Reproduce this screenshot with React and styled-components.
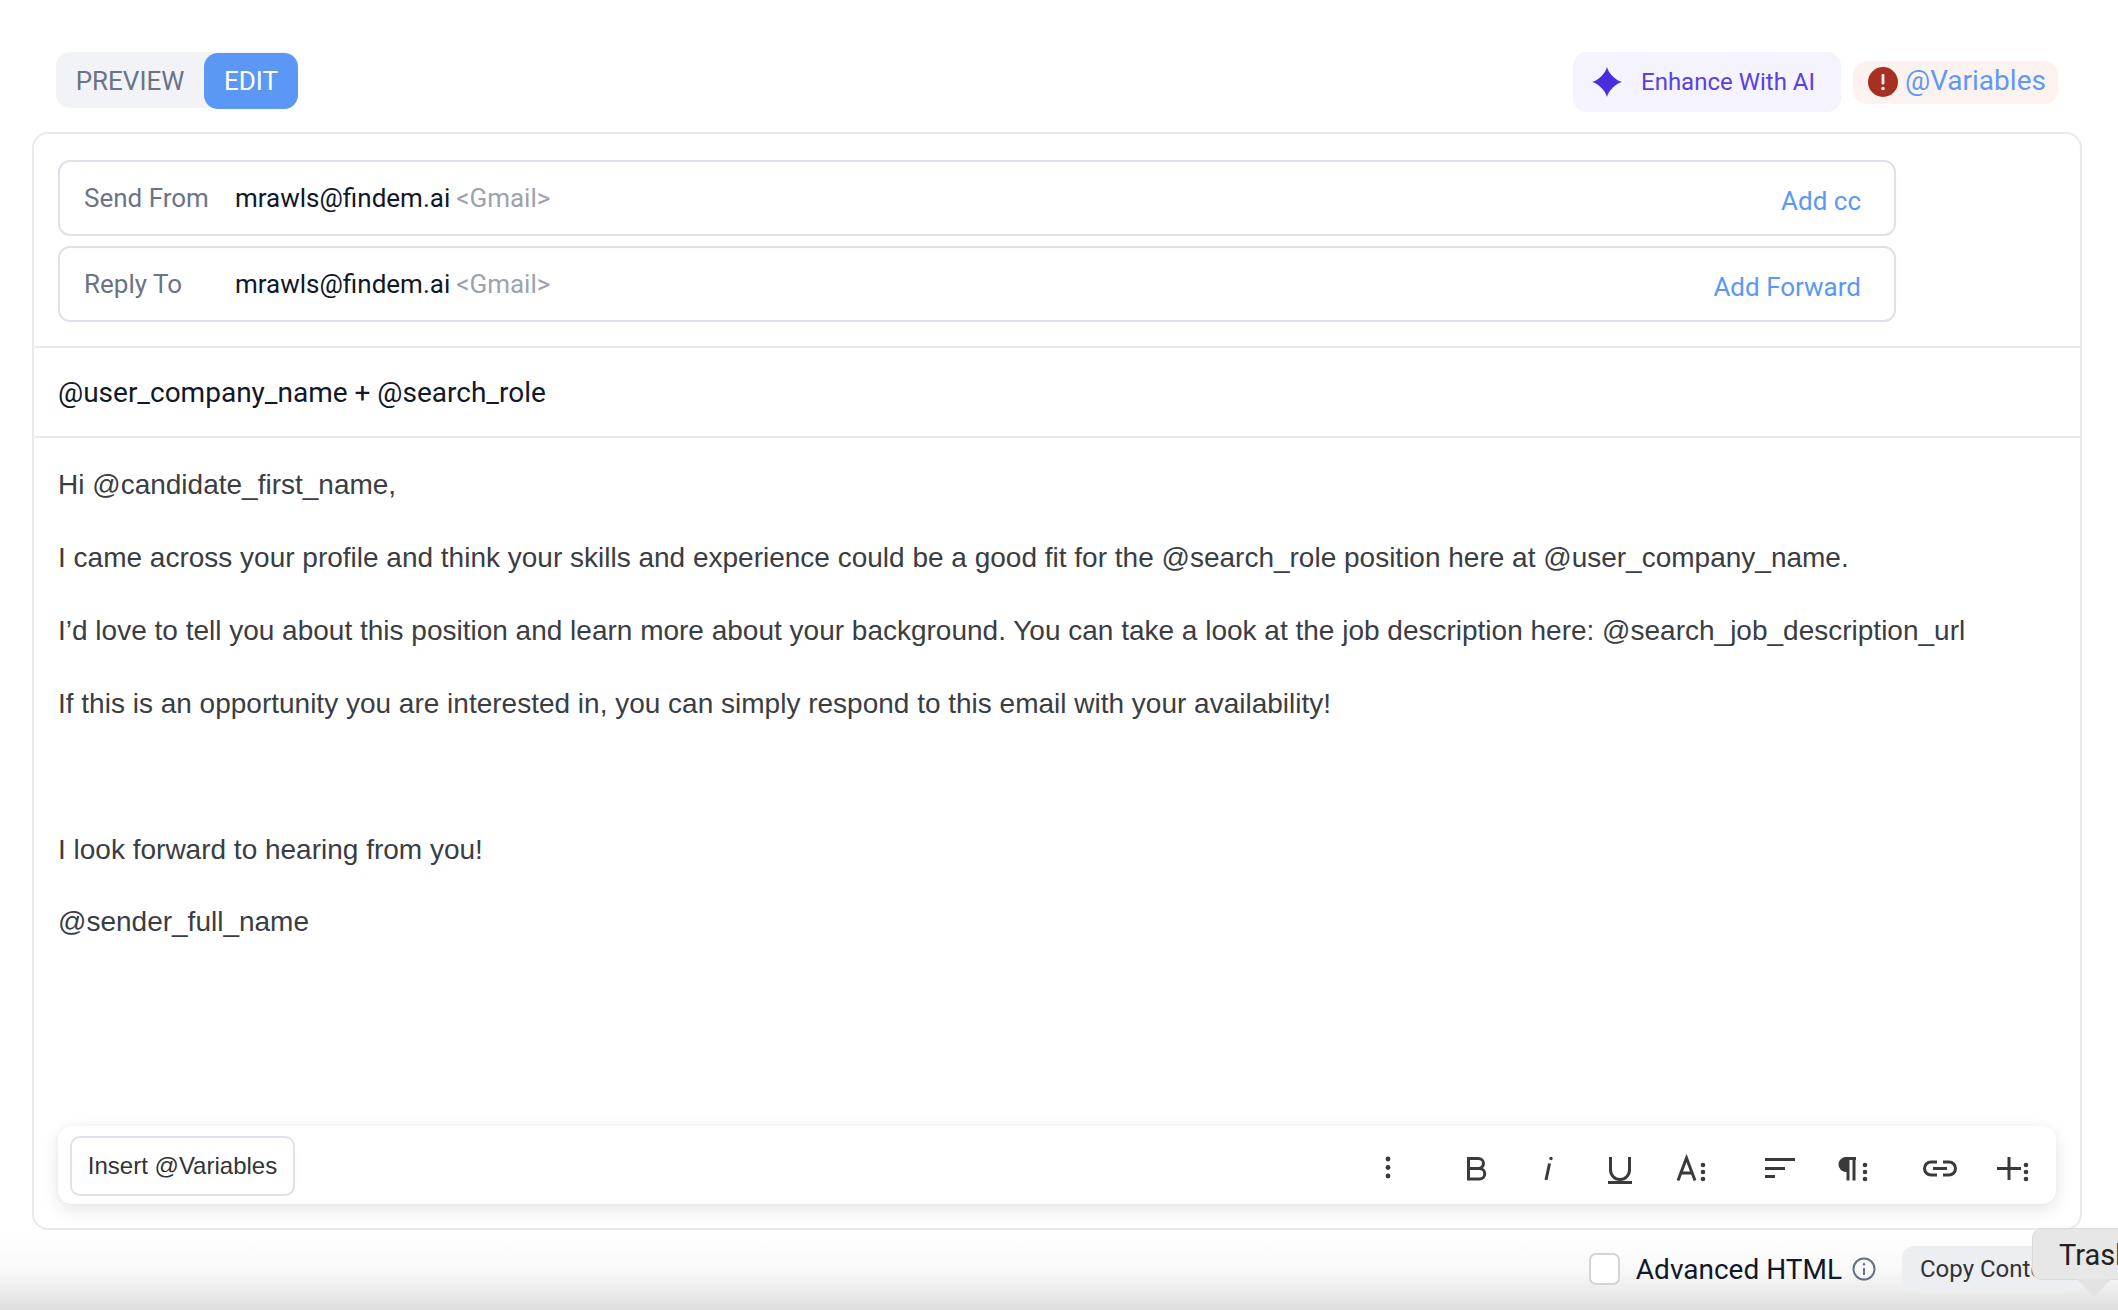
import React from "react";
import styled, { createGlobalStyle } from "styled-components";

const Global = createGlobalStyle`
  html, body { margin: 0; padding: 0; background: #fff; overflow: hidden; }
  * { box-sizing: border-box; }
  body { font-family: Roboto, "Liberation Sans", sans-serif; }
`;

const Shell = styled.div`
  position: relative;
  width: 2118px;
  height: 1310px;
  overflow: hidden;
  display: flex;
  flex-direction: column;
  background: #fff;
`;
const Main = styled.div`
  flex: 1;
  display: flex;
  flex-direction: column;
  padding: 52px 36px 0 32px;
  min-height: 0;
`;
const Header = styled.header`
  display: flex;
  justify-content: space-between;
  align-items: flex-start;
  height: 80px;
  padding: 0 24px 0 24px;
`;
const Tabs = styled.div`
  display: flex;
  width: 242px;
  height: 56px;
  background: #f2f3f7;
  border-radius: 14px;
`;
const Tab = styled.div`
  height: 56px;
  margin-top: ${(p) => (p.$active ? "1px" : "0")};
  flex: ${(p) => (p.$active ? "0 0 94px" : "1")};
  display: flex;
  align-items: center;
  justify-content: center;
  padding-top: ${(p) => (p.$active ? "0" : "2px")};
  font-size: 26px;
  color: ${(p) => (p.$active ? "#fff" : "#6b7487")};
  background: ${(p) => (p.$active ? "#5b98f5" : "transparent")};
  border-radius: 14px;
`;
const Actions = styled.div`
  display: flex;
  align-items: center;
  gap: 12px;
`;
const Enhance = styled.div`
  width: 268px;
  height: 60px;
  padding-left: 19px;
  display: flex;
  align-items: center;
  gap: 19px;
  background: #f5f3fe;
  border-radius: 14px;
  color: #5b40e0;
  font-size: 24px;
`;
const VarChip = styled.div`
  width: 205px;
  height: 43px;
  padding-left: 15px;
  display: flex;
  align-items: center;
  gap: 7px;
  background: #fcf3f1;
  border-radius: 14px;
  color: #5e9af3;
  font-size: 28px;
`;
const VarText = styled.span`
  margin-top: -3px;
`;
const Card = styled.section`
  flex: 1;
  display: flex;
  flex-direction: column;
  border: 2px solid #e9e9ef;
  border-radius: 16px;
  min-height: 0;
`;
const Fields = styled.div`
  display: flex;
  flex-direction: column;
  gap: 10px;
  padding: 26px 0 24px 24px;
  border-bottom: 2px solid #e9e9ef;
`;
const Field = styled.div`
  width: 1838px;
  height: 76px;
  display: flex;
  align-items: center;
  padding: 0 33px 0 24px;
  border: 2px solid #dfe1ea;
  border-radius: 12px;
  font-size: 26px;
`;
const Label = styled.span`
  width: 151px;
  color: #6b7487;
`;
const Email = styled.span`
  color: #111827;
`;
const Provider = styled.span`
  margin-left: 6px;
  color: #9ca3af;
`;
const AddLink = styled.span`
  margin-left: auto;
  margin-top: 6px;
  color: #5b98f5;
`;
const Subject = styled.div`
  height: 90px;
  display: flex;
  align-items: center;
  padding-left: 24px;
  font-size: 28px;
  color: #111827;
  border-bottom: 2px solid #e9e9ef;
`;
const Body = styled.div`
  flex: 1;
  padding: 11px 24px 0;
  font-family: "Liberation Sans", Arial, sans-serif;
  font-size: 28px;
  line-height: 72.9px;
  color: #3a3d42;
`;
const Para = styled.p`
  margin: 0;
  min-height: 72.9px;
  white-space: nowrap;
`;
const Toolbar = styled.div`
  height: 78px;
  margin: 0 24px 24px 24px;
  padding: 0 24px 0 12px;
  display: flex;
  align-items: center;
  background: #fff;
  border-radius: 14px;
  box-shadow: 0 6px 18px rgba(20, 20, 40, 0.1), 0 0 6px rgba(20, 20, 40, 0.03);
`;
const InsertButton = styled.div`
  height: 60px;
  width: 225px;
  display: flex;
  align-items: center;
  justify-content: center;
  border: 2px solid #dfe1ee;
  border-radius: 10px;
  font-family: "Liberation Sans", Arial, sans-serif;
  font-size: 24px;
  color: #333;
  margin: 2px auto 0 0;
`;
const ToolGroups = styled.div`
  display: flex;
  gap: 48px;
`;
const ToolGroup = styled.div`
  display: flex;
  gap: 32px;
`;
const ToolIcon = styled.svg`
  width: 40px;
  height: 40px;
  display: block;
  fill: none;
  stroke: #3a3a3a;
  stroke-width: 3;
`;
const Dot = styled.circle`
  fill: #3a3a3a;
  stroke: none;
`;
const Bar = styled.rect`
  fill: #3a3a3a;
  stroke: none;
`;
const Footer = styled.footer`
  height: 80px;
  flex: none;
  display: flex;
  align-items: center;
  justify-content: flex-end;
  padding: 0 38px 2px 0;
  background: linear-gradient(#ffffff 0%, #f9f9f9 50%, #eeeeee 72%, #dddddf 100%);
`;
const Check = styled.div`
  width: 31px;
  height: 32px;
  margin-right: 16px;
  border: 2px solid #d4d4d6;
  border-radius: 7px;
  background: #fff;
`;
const CheckLabel = styled.span`
  font-size: 28px;
  color: #111827;
`;
const InfoIcon = styled.svg`
  width: 24px;
  height: 24px;
  margin: 0 26px 0 10px;
  fill: none;
  stroke: #667085;
  stroke-width: 2;
`;
const CopyButton = styled.div`
  width: 178px;
  height: 46px;
  padding-left: 18px;
  display: flex;
  align-items: center;
  white-space: nowrap;
  overflow: hidden;
  background: #eceef2;
  border-radius: 12px;
  font-size: 24px;
  color: #333;
`;
const Tooltip = styled.div`
  position: absolute;
  left: 2032px;
  top: 1228px;
  width: 140px;
  height: 52px;
  padding: 2px 0 0 26px;
  display: flex;
  align-items: center;
  background: #e7e7e7;
  border: 1px solid #dadada;
  border-radius: 10px;
  font-size: 29px;
  color: #222;
  &::after {
    content: "";
    position: absolute;
    left: 44px;
    top: 100%;
    border-left: 17px solid transparent;
    border-right: 17px solid transparent;
    border-top: 18px solid #e3e3e3;
  }
`;

const DotsColumn = ({ x = 31 }) => (
  <>
    <Dot cx={x} cy="20" r="2.3" />
    <Dot cx={x} cy="27" r="2.3" />
    <Dot cx={x} cy="34" r="2.3" />
  </>
);

const Star = () => (
  <svg width="30" height="30" viewBox="0 0 30 30">
    <path d="M15 0C16.2 6 24 13.8 30 15C24 16.2 16.2 24 15 30C13.8 24 6 16.2 0 15C6 13.8 13.8 6 15 0Z" fill="#4a2ddc" />
  </svg>
);
const Alert = () => (
  <svg width="30" height="30" viewBox="0 0 30 30">
    <circle cx="15" cy="15" r="15" fill="#a63022" />
    <rect x="13.6" y="7" width="2.8" height="10.5" rx="1.2" fill="#fdeeea" />
    <circle cx="15" cy="21.5" r="1.8" fill="#fdeeea" />
  </svg>
);

const paragraphs = [
  "Hi @candidate_first_name,",
  "I came across your profile and think your skills and experience could be a good fit for the @search_role position here at @user_company_name.",
  "I’d love to tell you about this position and learn more about your background. You can take a look at the job description here: @search_job_description_url",
  "If this is an opportunity you are interested in, you can simply respond to this email with your availability!",
  "",
  "I look forward to hearing from you!",
  "@sender_full_name",
];

export default function App() {
  return (
    <Shell>
      <Global />
      <Main>
        <Header>
          <Tabs>
            <Tab>PREVIEW</Tab>
            <Tab $active>EDIT</Tab>
          </Tabs>
          <Actions>
            <Enhance>
              <Star />
              Enhance With AI
            </Enhance>
            <VarChip>
              <Alert />
              <VarText>@Variables</VarText>
            </VarChip>
          </Actions>
        </Header>
        <Card>
          <Fields>
            <Field>
              <Label>Send From</Label>
              <Email>mrawls@findem.ai</Email>
              <Provider>&lt;Gmail&gt;</Provider>
              <AddLink>Add cc</AddLink>
            </Field>
            <Field>
              <Label>Reply To</Label>
              <Email>mrawls@findem.ai</Email>
              <Provider>&lt;Gmail&gt;</Provider>
              <AddLink>Add Forward</AddLink>
            </Field>
          </Fields>
          <Subject>@user_company_name + @search_role</Subject>
          <Body>
            {paragraphs.map((t, i) => (
              <Para key={i}>{t}</Para>
            ))}
          </Body>
          <Toolbar>
            <InsertButton>Insert @Variables</InsertButton>
            <ToolGroups>
              <ToolGroup>
                <ToolIcon viewBox="0 0 40 40">
                  <Dot cx="20" cy="14" r="2.4" />
                  <Dot cx="20" cy="22.5" r="2.4" />
                  <Dot cx="20" cy="31" r="2.4" />
                </ToolIcon>
              </ToolGroup>
              <ToolGroup>
                <ToolIcon viewBox="0 0 40 40">
                  <path d="M12.5 13.5H22.5a5 5 0 0 1 0 10H12.5ZM12.5 23.5H23.5a5.25 5.25 0 0 1 0 10.5H12.5Z" />
                </ToolIcon>
                <ToolIcon viewBox="0 0 40 40">
                  <path d="M18 35L21.5 18.5" />
                  <Dot cx="23" cy="13.5" r="1.7" />
                </ToolIcon>
                <ToolIcon viewBox="0 0 40 40">
                  <path d="M10.5 12V25a9.5 9.5 0 0 0 19 0V12" />
                  <Bar x="8" y="36" width="24" height="3" />
                </ToolIcon>
                <ToolIcon viewBox="0 0 40 40">
                  <path d="M6 35.5L14.5 13L23 35.5M9 28H20" />
                  <DotsColumn />
                </ToolIcon>
              </ToolGroup>
              <ToolGroup>
                <ToolIcon viewBox="0 0 40 40">
                  <Bar x="5" y="13" width="30" height="3" />
                  <Bar x="5" y="22" width="20" height="3" />
                  <Bar x="5" y="30" width="10" height="3" />
                </ToolIcon>
                <ToolIcon viewBox="0 0 40 40">
                  <path d="M14 12a7.5 7.5 0 0 0 0 15H16V12Z" fill="#3a3a3a" stroke="none" />
                  <path d="M13 13.5H24M16 12.5V35.5M22 12.5V35.5" />
                  <DotsColumn x={33} />
                </ToolIcon>
              </ToolGroup>
              <ToolGroup>
                <ToolIcon viewBox="0 0 40 40">
                  <path d="M17 17H11a6.5 6.5 0 0 0 0 13H17M23 17H29a6.5 6.5 0 0 1 0 13H23M13 23.5H27" />
                </ToolIcon>
                <ToolIcon viewBox="0 0 40 40">
                  <path d="M17 12V35M5 23.5H29" />
                  <DotsColumn x={34} />
                </ToolIcon>
              </ToolGroup>
            </ToolGroups>
          </Toolbar>
        </Card>
      </Main>
      <Footer>
        <Check />
        <CheckLabel>Advanced HTML</CheckLabel>
        <InfoIcon viewBox="0 0 24 24">
          <circle cx="12" cy="12" r="10.5" />
          <path d="M12 11V18" />
          <circle cx="12" cy="7.2" r="1.2" fill="#667085" stroke="none" />
        </InfoIcon>
        <CopyButton>Copy Content</CopyButton>
      </Footer>
      <Tooltip>Trash</Tooltip>
    </Shell>
  );
}
